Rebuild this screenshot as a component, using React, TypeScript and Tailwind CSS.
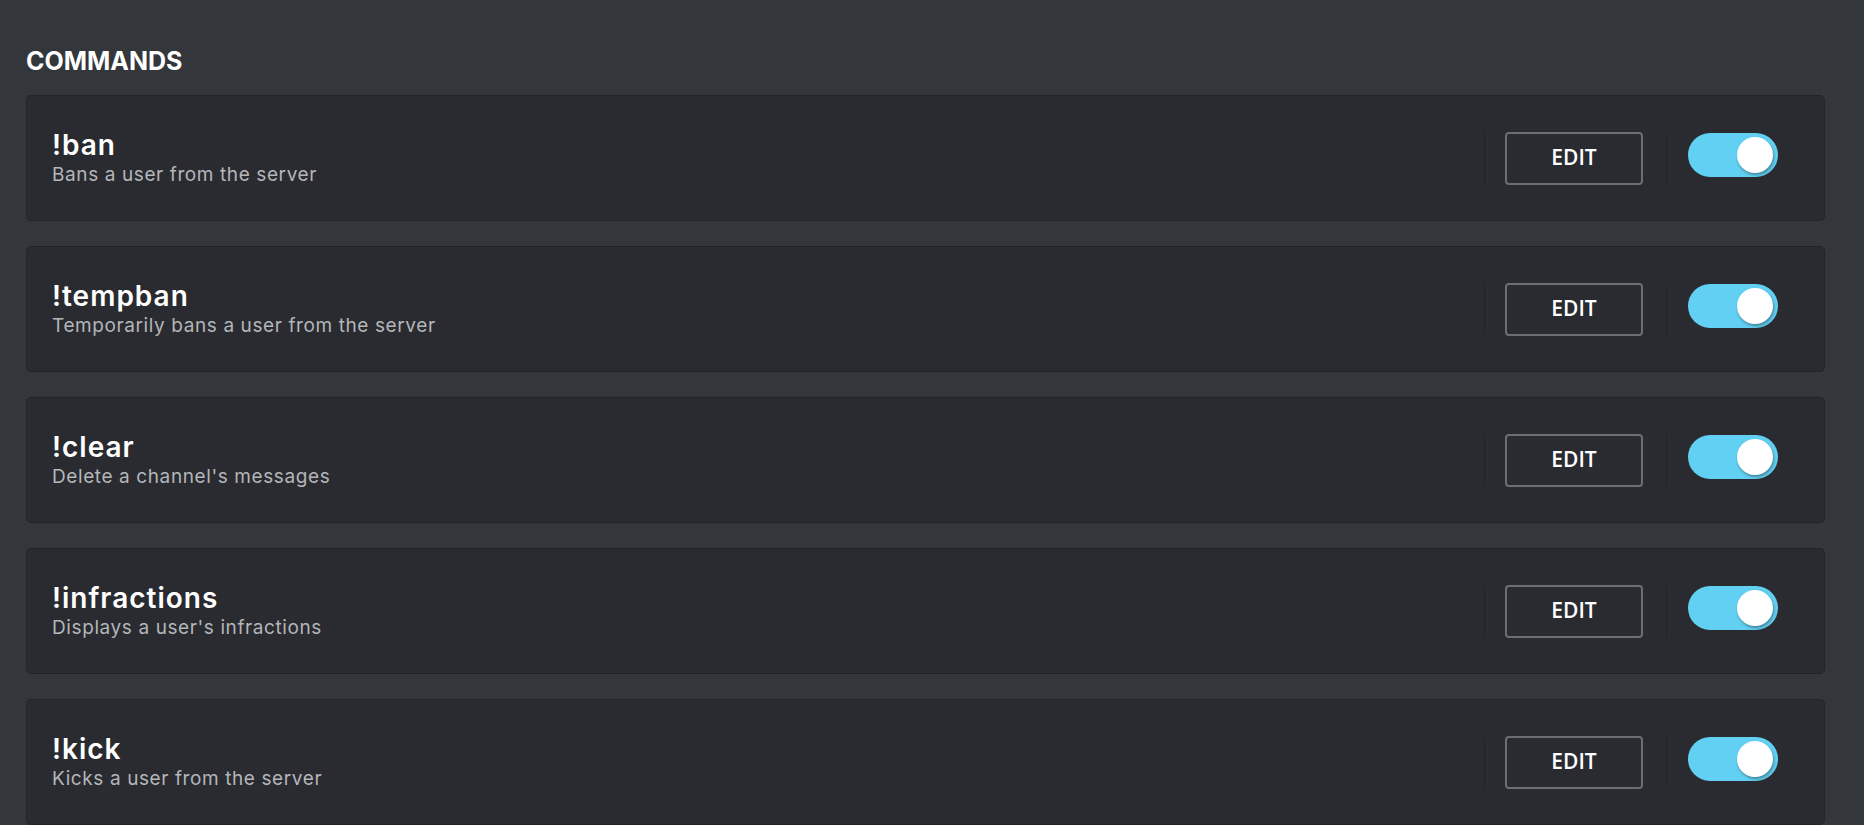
import React, { useState } from "react";

const commands = [
  { name: "!ban", description: "Bans a user from the server" },
  { name: "!tempban", description: "Temporarily bans a user from the server" },
  { name: "!clear", description: "Delete a channel's messages" },
  { name: "!infractions", description: "Displays a user's infractions" },
  { name: "!kick", description: "Kicks a user from the server" },
];

function Toggle({ on, onChange }: { on: boolean; onChange: () => void }) {
  return (
    <button
      onClick={onChange}
      className={`relative h-[44px] w-[90px] rounded-full ${on ? "bg-[#62d0f2]" : "bg-[#4a4d52]"}`}
    >
      <span
        className={`absolute top-[4px] h-[36px] w-[36px] rounded-full bg-white shadow-[1px_2px_3px_rgba(0,0,0,0.35)] ${on ? "left-[49px]" : "left-[4px]"}`}
      />
    </button>
  );
}

function CommandRow({ name, description }: { name: string; description: string }) {
  const [enabled, setEnabled] = useState(true);

  return (
    <div className="flex h-[126px] items-center rounded-[5px] border border-[#222428] bg-[#292b30] pl-[25px] pr-[46px]">
      <div className="flex flex-1 flex-col">
        <p className="text-[28px] font-semibold leading-[34px] tracking-[1px] text-white">{name}</p>
        <p className="text-[19px] leading-[26px] tracking-[0.6px] text-[#b4b6b9]">{description}</p>
      </div>
      <div className="h-[51px] w-px bg-[#222327]" />
      <button className="ml-[20px] flex h-[53px] w-[138px] items-center justify-center rounded-[4px] border-2 border-[#6b6e72] font-['Open_Sans',sans-serif] text-[21px] font-semibold text-white">
        EDIT
      </button>
      <div className="ml-[23px] h-[51px] w-px bg-[#222327]" />
      <div className="ml-[21px]">
        <Toggle on={enabled} onChange={() => setEnabled(!enabled)} />
      </div>
    </div>
  );
}

export default function App() {
  return (
    <div className="min-h-screen w-full bg-[#33363b] pl-[26px] pr-[39px] pt-[44px] font-['Inter',sans-serif]">
      <h2 className="text-[25px] font-bold leading-[34px] text-white">COMMANDS</h2>
      <div className="mt-[17px] flex flex-col gap-[25px]">
        {commands.map((c) => (
          <CommandRow key={c.name} name={c.name} description={c.description} />
        ))}
      </div>
    </div>
  );
}
